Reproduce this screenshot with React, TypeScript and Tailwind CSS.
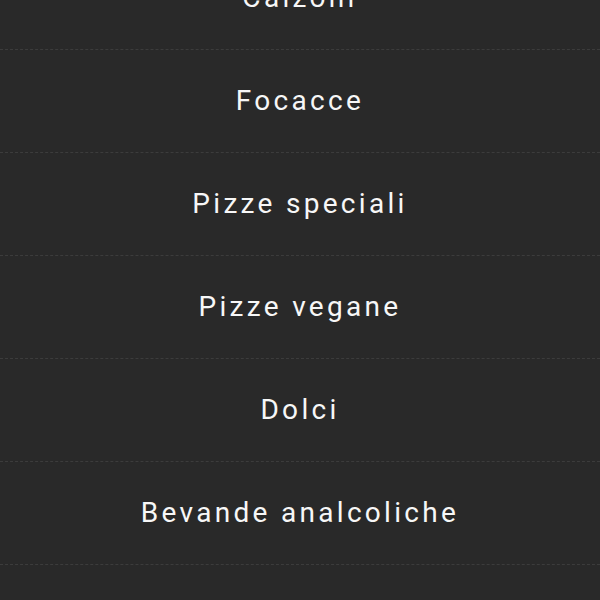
const categories = [
  'Calzoni',
  'Focacce',
  'Pizze speciali',
  'Pizze vegane',
  'Dolci',
  'Bevande analcoliche',
  'Birre',
];

export default function App() {
  return (
    <div className="h-[600px] w-[600px] overflow-hidden bg-[#292929]">
      <ul className="-mt-[53px] flex flex-col">
        {categories.map((name) => (
          <li
            key={name}
            className="flex h-[103px] items-center justify-center border-b border-dashed border-[#3c3c3c] text-[28px] tracking-[3.3px] text-[#f7f7f7]"
            style={{ fontFamily: 'Roboto, "Noto Sans", sans-serif' }}
          >
            {name}
          </li>
        ))}
      </ul>
    </div>
  );
}
